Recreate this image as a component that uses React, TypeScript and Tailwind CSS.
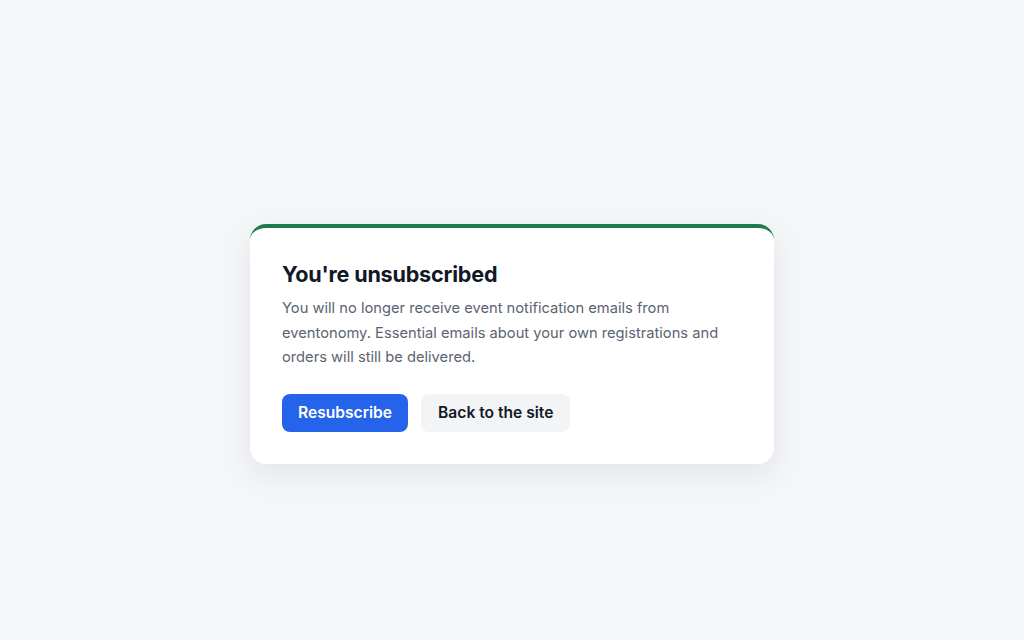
export default function App() {
  return (
    <div
      className="flex min-h-screen items-center justify-center bg-[#f5f6f8] pt-12"
      style={{ fontFamily: 'Inter, "Noto Sans", sans-serif' }}
    >
      <div className="w-[524px] rounded-2xl border-t-4 border-[#1f7a4d] bg-white px-8 pb-8 pt-8 shadow-[0_10px_30px_rgba(15,23,42,0.08)]">
        <h1 className="text-[21.6px] font-bold leading-7 tracking-[-0.01em] text-[#111827]">You're unsubscribed</h1>
        <p className="mt-2 text-[14.7px] leading-[24.5px] text-[#5b6472]">
          You will no longer receive event notification emails from eventonomy. Essential emails about your own
          registrations and orders will still be delivered.
        </p>
        <div className="mt-6 flex gap-[13px]">
          <button type="button" className="h-[38px] rounded-lg bg-[#2563eb] px-4 text-[15.6px] font-semibold text-white">
            Resubscribe
          </button>
          <button type="button" className="h-[38px] rounded-lg bg-[#f3f4f6] px-[17px] text-[15.6px] font-semibold text-[#111827]">
            Back to the site
          </button>
        </div>
      </div>
    </div>
  );
}
